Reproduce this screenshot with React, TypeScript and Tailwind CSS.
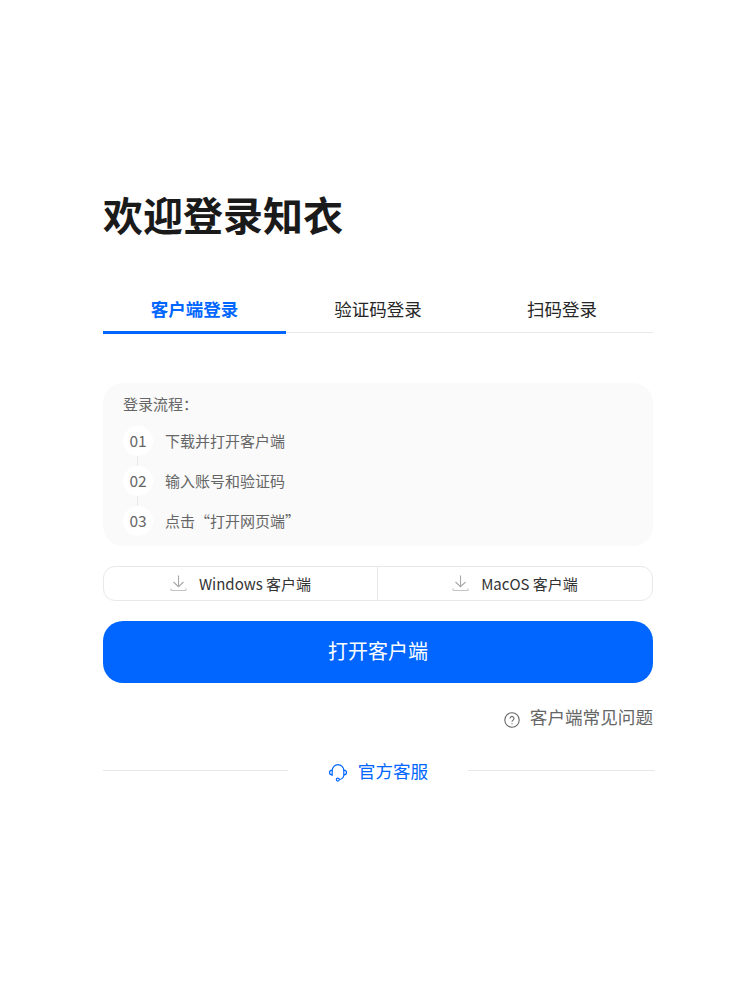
import React from 'react';

const font = '[font-family:"Noto_Sans_CJK_SC","Noto_Sans",sans-serif]';

const steps = [
  { no: '01', label: '下载并打开客户端' },
  { no: '02', label: '输入账号和验证码' },
  { no: '03', label: '点击“打开网页端”' },
];

function DownloadIcon() {
  return (
    <svg width="17" height="17" viewBox="0 0 17 17" fill="none" stroke="#a8a8a8" strokeWidth="1.1">
      <path d="M8.5 .5v11M3.5 7l5 4.7 5-4.7" />
      <path d="M1 13.5v1.2c0 .5.3.8.8.8h13.4c.5 0 .8-.3.8-.8v-1.2" stroke="#c4c4c4" strokeWidth="1.2" />
    </svg>
  );
}

function HelpIcon() {
  return (
    <svg width="16" height="16" viewBox="0 0 16 16" fill="none" stroke="#666666" strokeWidth="1.1" className="mt-[4px]">
      <circle cx="8" cy="8" r="7.2" />
      <path d="M6 6.4a2 2 0 1 1 3.1 1.7c-.7.5-1.1.8-1.1 1.6" />
      <path d="M8 11.2v1" />
    </svg>
  );
}

function ServiceIcon() {
  return (
    <svg width="20" height="20" viewBox="0 0 20 20" fill="none" stroke="#0066ff" strokeWidth="1.2">
      <path d="M4.2 8.5a5.8 5.8 0 0 1 11.6 0" />
      <path d="M4.2 8.2v5C2.6 13 1.5 12 1.5 10.6S2.6 8.4 4.2 8.2Z" />
      <path d="M15.8 8.2v5c1.6-.2 2.7-1.2 2.7-2.6s-1.1-2.2-2.7-2.4Z" />
      <path d="M15.8 13.5c-.4 2.4-2 3.7-4.4 4" />
      <circle cx="9.8" cy="17.6" r="1.5" />
    </svg>
  );
}

export default function App() {
  return (
    <div className={`min-h-[988px] w-[756px] bg-white pl-[103px] pt-[186px] ${font}`}>
      <div className="w-[550px]">
        <h1 className="text-[40px] font-bold leading-[56px] text-[#1a1a1a]">欢迎登录知衣</h1>

        <div className="mt-[47px] flex h-[44px] border-b border-[#e8e8e8]">
          <div className="-mb-[2px] flex h-[45px] w-[183px] items-center justify-center border-b-[3px] border-[#0066ff] pb-[2px] text-[17.5px] font-bold text-[#0066ff]">
            客户端登录
          </div>
          <div className="flex h-[40px] w-[184px] items-center justify-center text-[17.5px] text-[#262626]">验证码登录</div>
          <div className="flex h-[40px] w-[183px] items-center justify-center pl-[1px] text-[17.5px] text-[#262626]">扫码登录</div>
        </div>

        <div className="mt-[50px] h-[163px] rounded-[20px] bg-[#fafafa] px-[20px] pt-[9px]">
          <div className="text-[15px] leading-[24px] text-[#666666]">登录流程：</div>
          <div className="mt-[10px] flex flex-col gap-[10px]">
            {steps.map((step, i) => (
              <div key={step.no} className="relative flex h-[30px] items-center gap-[12px]">
                <div className="flex h-[30px] w-[30px] items-center justify-center rounded-full bg-white pb-[1px] text-[15.5px] text-[#666666]">
                  {step.no}
                </div>
                <span className="text-[15px] text-[#666666]">{step.label}</span>
                {i < 2 && <div className="absolute left-[14px] top-[30px] h-[10px] w-px bg-[#e8e8e8]" />}
              </div>
            ))}
          </div>
        </div>

        <div className="mt-[20px] flex h-[35px] rounded-[12px] border border-[#e8e8e8] text-[15px] text-[#333333]">
          <div className="flex w-[274px] items-center justify-center gap-[12px] border-r border-[#e8e8e8]">
            <DownloadIcon />
            <span className="pt-[2px]">Windows 客户端</span>
          </div>
          <div className="flex flex-1 items-center justify-center gap-[12px]">
            <DownloadIcon />
            <span className="pt-[2px]">MacOS 客户端</span>
          </div>
        </div>

        <button className="mt-[20px] flex h-[62px] w-full items-center justify-center rounded-[20px] bg-[#0066ff] pb-[2px] text-[20px] text-white">
          打开客户端
        </button>

        <div className="mt-[22px] flex h-[26px] items-center justify-end gap-[10px] text-[17.6px] text-[#666666]">
          <HelpIcon />
          <span className="pb-[2px]">客户端常见问题</span>
        </div>

        <div className="mt-[28px] flex h-[26px] w-[552px] items-center">
          <div className="-mt-[4px] h-px w-[185px] bg-[#e8e8e8]" />
          <div className="flex flex-1 items-center justify-center gap-[10px] text-[17.6px] text-[#0066ff]">
            <ServiceIcon />
            <span className="pb-[2px]">官方客服</span>
          </div>
          <div className="-mt-[4px] h-px w-[187px] bg-[#e8e8e8]" />
        </div>
      </div>
    </div>
  );
}
